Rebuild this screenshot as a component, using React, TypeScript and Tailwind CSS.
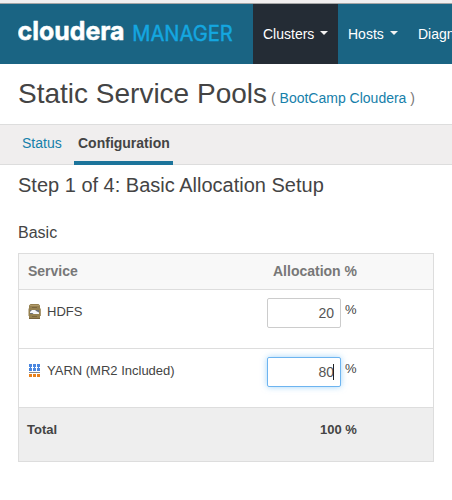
import type { ReactNode } from "react";

function Logo() {
  return (
    <svg width="220" height="40" viewBox="0 0 220 40" className="block shrink-0">
      <text x="-0.5" y="28.2" fill="#ffffff" stroke="#ffffff" strokeWidth="0.5" strokeLinejoin="round" fontFamily="Inter, sans-serif" fontWeight="700" fontSize="25.5" textLength="107" lengthAdjust="spacingAndGlyphs">
        cloudera
      </text>
      <text x="114.3" y="28.6" fill="#14a7e0" stroke="#14a7e0" strokeWidth="0.4" fontFamily="Inter, sans-serif" fontWeight="400" fontSize="21" textLength="100.5" lengthAdjust="spacingAndGlyphs">
        MANAGER
      </text>
    </svg>
  );
}

function Caret() {
  return (
    <svg width="8" height="4" viewBox="0 0 8 4" className="mb-0.5 ml-1.5 shrink-0">
      <path d="M0 0H8L4 4Z" fill="#f2f2f2" />
    </svg>
  );
}

function HdfsIcon() {
  return (
    <svg width="13" height="15" viewBox="0 0 13 15" className="-mt-px shrink-0">
      <path d="M2.5 0H10.5L12 1.5V4.5H12.8V12H12V14.2L11 15H2L1 14.2V12H0.5V4.5H1V1.5Z" fill="#95804f" />
      <path d="M2 1H11V2H2Z" fill="#b19a69" />
      <path d="M4 3H9V4H4ZM4 12H9V13H4Z" fill="#7a6540" />
      <path d="M1 14H12V15H1Z" fill="#77623d" />
      <path d="M2 6H11V10H2Z" fill="#6c7078" />
      <path d="M2 8L4 6H7L8.5 7.3L11 8.5V10H5.5L4.5 9H2Z" fill="#f5f6fb" />
    </svg>
  );
}

function YarnIcon() {
  return (
    <svg width="13" height="14" viewBox="0 0 13 14" className="shrink-0" shapeRendering="crispEdges">
      <g fill="#4986e0">
        <path d="M1 0H4V3H1ZM5 0H8V3H5ZM9 0H12V3H9Z" />
        <path d="M1 4H4V7H1ZM5 4H8V7H5ZM9 4H12V7H9Z" />
        <path d="M2 3H3V4H2ZM6 3H7V4H6ZM10 3H11V4H10Z" />
      </g>
      <path d="M1 8H12V9H1Z" fill="#85888c" />
      <path d="M1 10H4V13H1ZM5 10H8V13H5ZM9 10H12V13H9Z" fill="#e8811c" />
    </svg>
  );
}

function ServiceRow({ icon, name, value, focused = false }: { icon: ReactNode; name: string; value: string; focused?: boolean }) {
  return (
    <div className="flex h-[59px] items-start border-b border-[#dddddd] pt-2">
      <div className="flex h-[28px] w-[248px] items-center gap-[6px] pl-[9px] text-[13px]">
        {icon}
        <span>{name}</span>
      </div>
      <div
        className={
          focused
            ? "flex h-[30px] w-[74px] items-center justify-end rounded-[2px] border border-[#6db4f0] bg-white pr-[6px] text-sm text-[#555555] shadow-[0_0_6px_rgba(102,185,245,0.6)]"
            : "flex h-[30px] w-[74px] items-center justify-end rounded-[2px] border border-[#cccccc] bg-white pr-[6px] text-sm text-[#555555]"
        }
      >
        <span>{value}</span>
        {focused && <span className="-ml-px h-4 w-px bg-[#222222]" />}
      </div>
      <span className="ml-1 pt-0.5 text-[13px]">%</span>
    </div>
  );
}

export default function App() {
  return (
    <div className="h-[500px] w-[452px] overflow-hidden bg-white font-['Liberation_Sans',Arial,sans-serif] text-[#444444]">
      <div className="h-1 border-b border-[#a5a5a5] bg-[#f1efef]" />
      <header className="flex h-[60px] bg-[#1a6483] pl-[18px]">
        <div className="flex w-[235px] shrink-0 pt-2">
          <Logo />
        </div>
        <nav className="flex shrink-0 text-sm text-white">
          <a className="flex w-[85px] items-center bg-[#242c35] pl-2.5">
            Clusters
            <Caret />
          </a>
          <a className="flex w-[70px] items-center pl-2.5">
            Hosts
            <Caret />
          </a>
          <a className="flex items-center pl-2.5">Diagnostics</a>
        </nav>
      </header>

      <div className="flex h-[60px] items-baseline gap-1 pl-[18px] pt-[10px]">
        <h1 className="text-[28px] leading-[40px]">Static Service Pools</h1>
        <span className="text-sm text-[#777777]">
          ( <a className="text-[#1680aa]">BootCamp Cloudera</a> )
        </span>
      </div>

      <div className="flex h-[41px] border-y border-[#dddddd] bg-[#f0eeee] pl-[18px] text-sm">
        <a className="h-[40px] w-[56px] pl-1 pt-2 text-[#1680aa]">Status</a>
        <a className="h-[40px] w-[99px] border-b-4 border-[#1c749b] pl-1 pt-2 font-bold">Configuration</a>
      </div>

      <main className="pl-[18px]">
        <h2 className="h-[57px] pt-[6px] text-[20px] leading-[28px]">Step 1 of 4: Basic Allocation Setup</h2>
        <h3 className="h-[31px] text-base leading-[22px]">Basic</h3>

        <section className="w-[416px] border border-[#dddddd]">
          <div className="flex h-[36px] items-start border-b border-[#dddddd] bg-[#f8f8f8] pl-[9px] pt-[7px] text-sm font-bold text-[#777777]">
            <span className="w-[245px]">Service</span>
            <span>Allocation %</span>
          </div>
          <ServiceRow icon={<HdfsIcon />} name="HDFS" value="20" />
          <ServiceRow icon={<YarnIcon />} name="YARN (MR2 Included)" value="80" focused />
          <div className="flex h-[53px] bg-[#eeeeee] pl-2 pt-3 text-[13px] font-bold">
            <span className="w-[293px]">Total</span>
            <span>100 %</span>
          </div>
        </section>
      </main>
    </div>
  );
}
